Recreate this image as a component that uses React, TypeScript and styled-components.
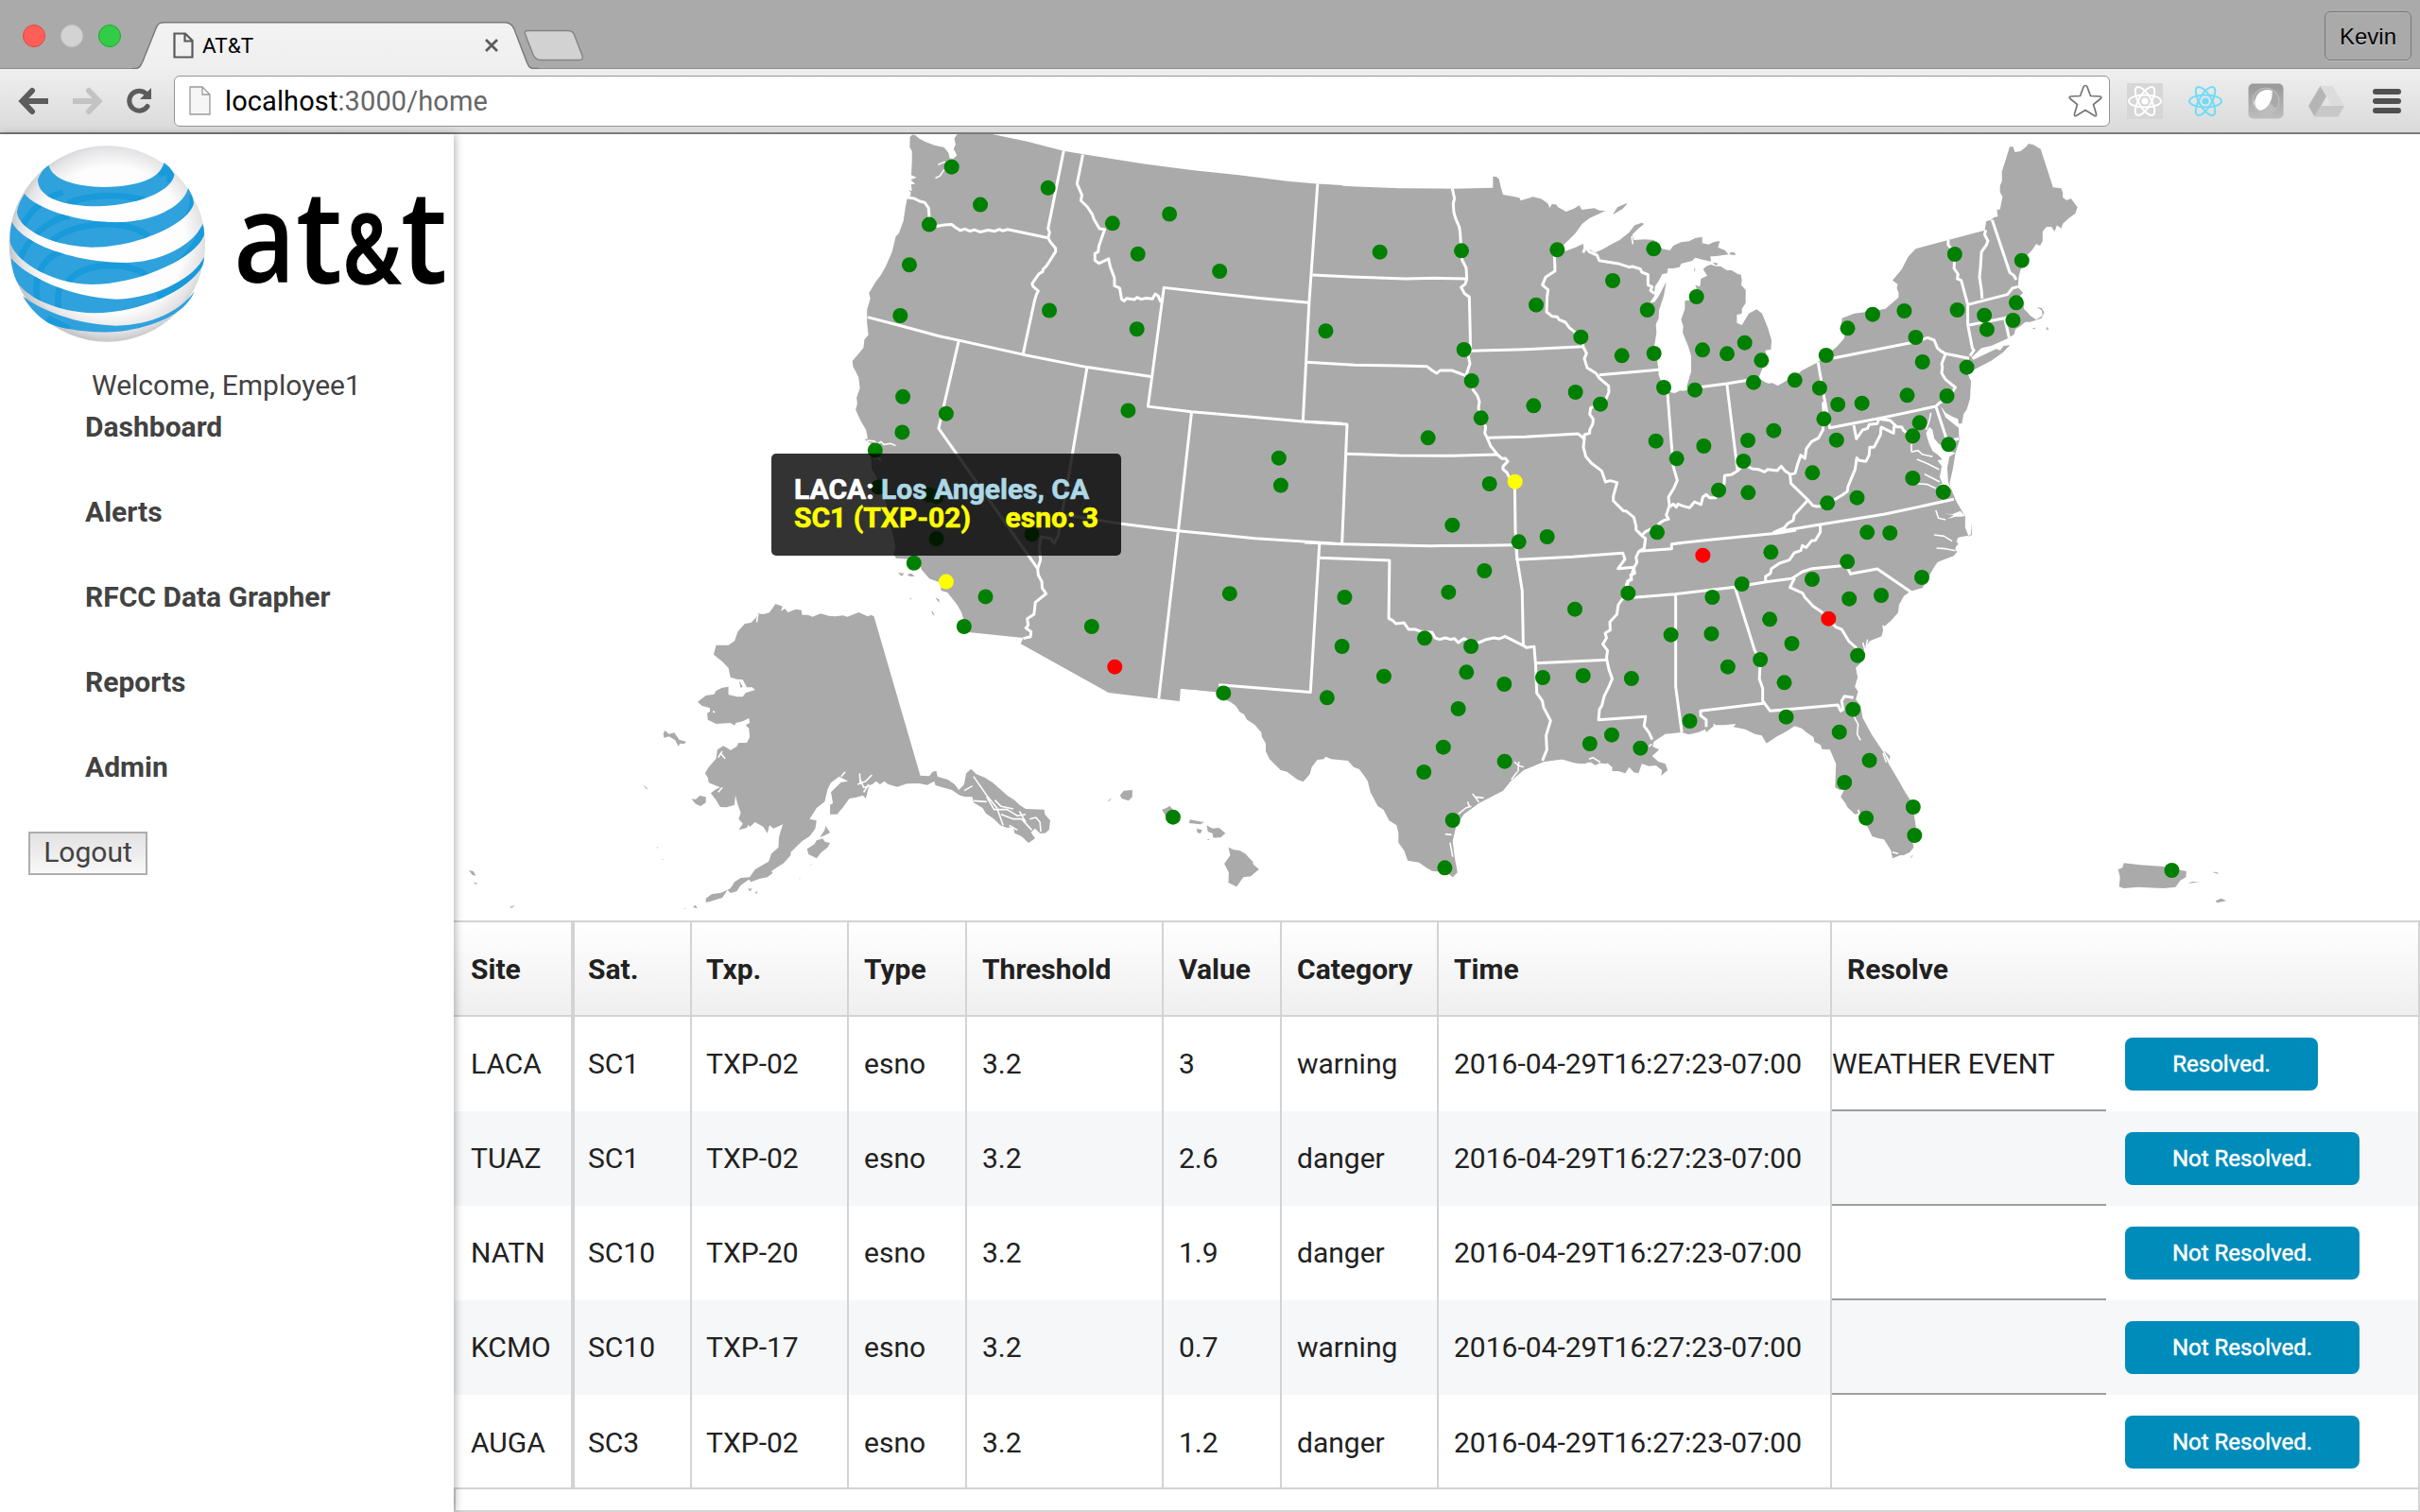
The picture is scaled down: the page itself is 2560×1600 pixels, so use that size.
import React from "react";
import styled, { createGlobalStyle } from "styled-components";

const GlobalStyle = createGlobalStyle`
  * { box-sizing: border-box; }
  html, body { margin: 0; padding: 0; background: #fff; }
  body { width: 2560px; height: 1600px; overflow: hidden; font-family: Roboto, "Liberation Sans", sans-serif; font-size: 30px; color: #212121; }
`;

const Window = styled.div`
  width: 2560px;
  height: 1600px;
  overflow: hidden;
  display: flex;
  flex-direction: column;
`;

/* ---------- browser chrome ---------- */

const TitleBar = styled.header`
  height: 73px;
  flex: none;
  display: flex;
  align-items: flex-start;
  padding: 0 9px 0 24px;
  background: #aaaaaa;
  box-shadow: inset 0 -1px 0 #8c8c8c;
`;

const Lights = styled.div`
  display: flex;
  gap: 16px;
  padding-top: 26px;
`;

const Light = styled.span<{ $fill: string; $edge: string }>`
  width: 24px;
  height: 24px;
  border-radius: 50%;
  background: ${(p) => p.$fill};
  border: 1px solid ${(p) => p.$edge};
`;

const Tab = styled.div`
  position: relative;
  width: 430px;
  height: 50px;
  margin: 23px 0 0 12px;
  padding: 0 42px 0 43px;
  display: flex;
  align-items: center;
`;

const TabShape = styled.svg`
  position: absolute;
  left: 0;
  top: 0;
`;

const TabTitle = styled.span`
  position: relative;
  flex: 1;
  margin-left: 9px;
  font-family: Roboto, sans-serif;
  font-size: 22.5px;
  color: #000;
`;

const TabIcon = styled.svg`
  position: relative;
  flex: none;
`;

const NewTab = styled.svg`
  margin: 31px 0 0 -16px;
`;

const UserButton = styled.button`
  margin: 12px 0 0 auto;
  width: 92px;
  height: 52px;
  padding: 2px 0 0;
  border: 1px solid #777;
  border-radius: 6px;
  background: transparent;
  box-shadow: 0 1px 0 #bdbdbd, inset 0 1px 0 #b6b6b6;
  font: 24px "Liberation Sans", sans-serif;
  color: #000;
  text-shadow: 0 1px 0 #ccc;
`;

const Toolbar = styled.div`
  height: 69px;
  flex: none;
  display: flex;
  align-items: center;
  padding: 0 20px 0 18px;
  background: linear-gradient(#efefef, #dadada);
  border-bottom: 2px solid #7c7c7c;
`;

const NavIcons = styled.div`
  display: flex;
  gap: 20px;
  width: 166px;
`;

const UrlBox = styled.div`
  width: 2048px;
  height: 54px;
  display: flex;
  align-items: center;
  padding: 0 7px 0 15px;
  border: 1px solid #959595;
  border-radius: 6px;
  background: #fff;
`;

const Url = styled.span`
  flex: 1;
  margin-left: 15px;
  padding-top: 1px;
  font-family: Roboto, sans-serif;
  font-size: 29px;
  letter-spacing: 0.1px;
  color: #000;
`;

const UrlRest = styled.span`
  color: #666;
`;

const Extensions = styled.div`
  display: flex;
  align-items: center;
  gap: 26px;
  margin-left: 18px;
`;

/* ---------- page ---------- */

const Page = styled.div`
  flex: 1;
  min-height: 0;
  display: flex;
`;

const Sidebar = styled.aside`
  position: relative;
  z-index: 1;
  width: 480px;
  flex: none;
  background: #fff;
  box-shadow: 2px 0 8px rgba(0, 0, 0, 0.28);
  color: #424242;
  line-height: 40px;
`;

const Logo = styled.svg`
  display: block;
`;

const Welcome = styled.div`
  margin: 26px 0 4px 97px;
`;

const Menu = styled.nav`
  display: flex;
  flex-direction: column;
  gap: 50px;
  padding-left: 90px;
`;

const MenuLink = styled.a`
  font-weight: 700;
`;

const Logout = styled.button`
  display: block;
  margin: 48px 0 0 30px;
  width: 126px;
  height: 46px;
  padding: 0 0 2px;
  border: 2px solid #adadad;
  background: linear-gradient(#e2e2e2, #f8f8f8);
  font: 30px/38px Roboto, sans-serif;
  color: #424242;
`;

const Content = styled.main`
  flex: 1;
  min-width: 0;
`;

const MapArea = styled.section`
  position: relative;
  height: 832px;
`;

const MapSvg = styled.svg`
  display: block;
`;

const Tooltip = styled.div`
  position: absolute;
  left: 336px;
  top: 338px;
  width: 370px;
  height: 108px;
  padding: 23px 24px;
  border-radius: 5px;
  background: rgba(0, 0, 0, 0.8);
  color: #fff;
  font-weight: 700;
  line-height: 30px;
  white-space: nowrap;
  -webkit-text-stroke: 0.6px currentColor;
`;

const Place = styled.span`
  color: lightblue;
`;

const Reading = styled.div`
  display: flex;
  justify-content: space-between;
  color: yellow;
`;

/* ---------- alert table ---------- */

const columns = "128px 124px 166px 125px 208px 125px 166px 416px 1fr";

const Table = styled.section`
  height: 626px;
  border: 2px solid #d3d3d3;
`;

const HeaderRow = styled.div`
  display: grid;
  grid-template-columns: ${columns};
  margin-left: -2px;
  height: 100px;
  background: linear-gradient(#fff, #efefef);
  border-bottom: 2px solid #d3d3d3;
  font-weight: 700;
`;

const Row = styled.div<{ $striped: boolean; $height: number }>`
  display: grid;
  grid-template-columns: ${columns};
  margin-left: -2px;
  height: ${(p) => p.$height}px;
  background: ${(p) => (p.$striped ? "#f6f7f8" : "#fff")};
`;

const Cell = styled.div<{ $wide?: boolean; $last?: boolean; $lift?: number }>`
  display: flex;
  align-items: center;
  padding: 0 0 ${(p) => p.$lift ?? 0}px 16px;
  border-right: ${(p) => (p.$last ? 0 : p.$wide ? 4 : 2)}px solid #d3d3d3;
  white-space: nowrap;
  &:first-child { padding-left: 18px; }
  &:nth-child(2) { padding-left: 14px; }
  &:nth-child(3) { padding-left: 15px; }
`;

const ResolveCell = styled.div`
  display: flex;
  align-items: center;
`;

const Reason = styled.div<{ $line: boolean }>`
  width: 290px;
  height: 100px;
  display: flex;
  align-items: center;
  border-bottom: ${(p) => (p.$line ? "2px solid #9e9e9e" : "0")};
`;

const ResolveButton = styled.button<{ $width: number }>`
  margin-left: 20px;
  width: ${(p) => p.$width}px;
  height: 56px;
  padding: 0;
  border: 0;
  border-radius: 8px;
  background: #008cba;
  color: #fff;
  font: 400 24px Roboto, sans-serif;
  -webkit-text-stroke: 0.5px currentColor;
`;

const TableFoot = styled.div`
  height: 24px;
  margin-left: -2px;
  border-top: 2px solid #d3d3d3;
`;

/* ---------- map data ---------- */

type Site = [number, number, string?];

interface Sheet {
  origin: [number, number];
  scale: [number, number];
  land: string[];
  borders: string[];
  water?: string[];
  lakes?: string[];
  sites: Site[];
}

const sheets: Sheet[] = [
  {
    origin: [880, 130],
    scale: [0.34439, 0.39541],
    land: [
      "M240 38L250 29 268 42 285 50 315 60 345 66 358 80 362 95 372 96 382 89 374 70 380 58 376 42 386 29 485 29 600 50 712 75 800 88 960 110 1100 126 1250 140 1400 156 1490 163 1568 167V1568H1250L1225 1548 1203 1530 1180 1523 1071 1514 1068 1548 1000 1541 850 1525 580 1394 588 1378 405 1362 404 1328 398 1310 385 1290 355 1257 336 1252 332 1230 300 1220 275 1195 270 1180 230 1167 197 1165 190 1155 195 1135 190 1110 175 1060 165 1010 150 975 135 945 122 925 122 905 118 890 120 858 100 848 110 845 105 822 90 800 73 768 78 752 76 735 86 710 82 680 65 652 63 637 75 625 97 602 100 580 112 568 108 535 108 500 118 470 114 455 135 425 150 408 165 385 185 345 196 305 206 295 220 262 226 225 232 200 242 195 242 185 236 180 246 182 243 165 256 163 242 153 260 146 244 140 246 100 246 75 239 65Z",
      "M203 1204L222 1206 214 1213ZM231 1209L244 1206 254 1214 240 1214ZM318 1270L330 1276 329 1285ZM306 1304L317 1319 308 1314ZM238 1272L246 1274 242 1276Z",
    ],
    borders: [
      "M232 200L252 202 270 210 285 213 297 228 299 250V272L320 277 345 273 368 272 380 280 395 288 408 284 425 290 437 286 455 292 480 287 500 290 515 285 525 289 540 285 664 308",
      "M712 75L664 283 669 293 664 308 672 320 687 335 687 345 660 382 648 393 648 398 636 404 615 430 618 438 634 450 628 460 622 478 587 620",
      "M771 85L753 163 768 193 765 208 785 225 800 245 805 258 822 283 838 285 820 330 818 345 808 350 808 368 820 376 835 370 850 364 855 385 868 415 868 436 884 442 890 472 898 477 905 470 930 473 937 467 950 472 965 469 985 471 993 458 1002 463 1011 480",
      "M1466 481L1320 470 1170 456 1020 441 971 759 1105 773 1447 799 1568 805",
      "M1492 163L1466 481 1447 799",
      "M110 520L220 545 330 571 390 582 587 620 784 654 980 679",
      "M390 582L328 818 632 1193 634 1210 645 1228 646 1245 658 1260 625 1283 621 1315 600 1327 603 1345 596 1352 612 1362 610 1375 588 1380",
      "M784 654L738 890 700 1080 695 1105 683 1125 672 1112 642 1108 637 1140 641 1170 632 1193",
      "M705 1048L889 1073 1064 1092 1300 1112 1568 1127",
      "M1105 773L1064 1092 1004 1541",
      "M1498 1122L1495 1164 1470 1524 1192 1504 1203 1525",
    ],
    water: [
      "M108 850L130 852 140 860 150 853 160 861 180 858 196 864",
      "M345 35L362 38 378 32M358 70L352 60 372 58 366 48M372 62V96M375 75L382 88M326 112L348 104M318 148L332 142 345 125M250 29L252 33M130 900L140 895 152 905",
    ],
    sites: [
      [368, 118], [456, 219], [664, 174], [299, 272], [238, 380], [210, 516], [218, 733], [216, 828],
      [133, 876], [351, 778], [862, 269], [1037, 244], [940, 351], [1191, 397], [668, 502], [937, 552],
      [910, 770], [1373, 897], [1379, 970], [1517, 557], [1222, 1260], [798, 1348], [869, 1456, "red"],
      [252, 1178], [351, 1228, "yellow"], [472, 1268], [406, 1348], [1203, 1526], [143, 975], [297, 995],
      [321, 1000], [321, 1113], [614, 1101],
    ],
  },
  {
    origin: [1380, 130],
    scale: [1 / 3, 1 / 3],
    land: [
      "M0 193L150 202 300 208 470 209 598 206V170L608 171 617 178 623 205 630 228 660 233 682 238 686 247 706 241 725 235 750 241 757 245 772 256 778 270 785 258 798 259 805 268 830 282 855 272 872 262 880 276 920 271 935 278 955 279 925 293 905 302 880 322 860 350 822 388 826 408 860 395 884 384 886 398 900 400 922 412 945 402 978 383 1000 372 1030 348 1048 325 1070 317 1078 321 1060 335 1040 355 1045 372 1080 370 1108 372 1135 400 1150 403 1160 405 1170 390 1195 379 1220 376 1240 366 1262 362 1262 382 1282 386 1300 378 1318 375 1312 395 1335 405 1345 418 1300 424 1288 424 1290 440 1262 434 1240 428 1230 438 1195 447 1190 458 1170 462 1155 462 1150 478 1135 480 1125 500 1112 520 1110 550 1095 572 1112 568 1125 548 1148 505 1140 550 1125 595 1124 620 1115 640 1117 665 1110 710 1118 745 1123 780 1124 800 1135 830 1160 855 1175 858 1212 840 1227 790V740L1218 710 1200 665 1202 645 1195 625 1207 590 1207 565 1230 562 1240 545 1244 525 1240 515 1255 520 1258 495 1278 485 1265 465 1275 455 1290 450 1305 455 1320 455 1340 468 1355 468 1375 480 1385 482 1388 500 1386 515 1400 530 1400 572 1388 590 1388 605 1372 610 1372 635 1388 642 1410 605 1435 592 1452 605 1470 650 1482 690 1480 720 1462 722 1465 735 1450 754 1455 775 1445 800 1440 810 1470 828 1485 826 1502 835 1540 812 1560 810V1500H0Z",
      "M980 290L995 270 1025 255 1010 272ZM1348 418L1352 410 1365 412 1368 420ZM1295 443L1313 446 1306 453ZM1236 458L1240 465 1238 474Z",
    ],
    borders: [
      "M25 483L150 489 320 495 415 493 515 495",
      "M469 209L476 240 472 255 474 285 480 305 491 330 494 350 497 406 500 435 513 460 515 495 510 512 497 522 508 542 523 553 527 722 520 740 525 765 512 803 468 786 430 786 420 795 405 786 388 773 300 771 160 769 6 760",
      "M527 724L700 719 885 710",
      "M793 420L795 470 765 490 755 515 773 530 770 550 768 600 785 614 802 616 808 625 828 633 840 650 877 680 885 712 895 732 888 748 897 778 925 795 935 810 965 835 966 855 955 880 940 892 908 905 905 925 916 940 915 955 905 975 905 985 888 990V1003L885 1030 893 1060 910 1080 943 1105 955 1140 970 1136 992 1142 980 1185V1200L1012 1232 1020 1232 1045 1252 1052 1280 1052 1292 1070 1310 1082 1320 1078 1350 1060 1362 1052 1380 1055 1395 1045 1413 1048 1430 1035 1435 1038 1450 1025 1455 1025 1475",
      "M884 412L892 395 905 410 928 420 935 437 1000 448 1030 458 1040 456 1066 464 1070 474 1090 482V515L1103 520 1098 532 1110 542",
      "M935 800L1125 784",
      "M512 803L530 820 535 848 548 865 555 885 552 905 560 937 575 965 572 985 580 1000 700 997 868 987 888 1003",
      "M580 1000L590 1025 612 1053 627 1066 638 1065 645 1075 630 1090 630 1100 642 1110 650 1125 667 1140 669 1290 674 1387",
      "M132 1051L300 1056 470 1057 612 1053",
      "M0 949L135 957 119 1335",
      "M0 1332L119 1337 400 1343 560 1342 669 1340",
      "M1152 860L1170 1090 1183 1135 1172 1160 1155 1188 1158 1215 1148 1245 1155 1258 1140 1262 1125 1272 1118 1295 1098 1290 1082 1298 1070 1310",
      "M1195 847L1340 828 1425 814M1340 826L1374 1103",
      "M1158 1220L1170 1210 1180 1220 1185 1210 1200 1216 1222 1222 1238 1203 1258 1212 1264 1188 1275 1180 1285 1190 1305 1190 1314 1167 1332 1145 1333 1120 1355 1117 1374 1105 1395 1085 1420 1098 1440 1100 1460 1108 1470 1100 1500 1104 1513 1090 1525 1105 1545 1118",
      "M674 1387L850 1378 1010 1366 1017 1385 995 1415 1045 1411",
      "M1060 1360L1165 1352V1337L1300 1322 1500 1303 1560 1293",
    ],
    water: [
      "M1152 465L1170 470 1165 490M1215 528L1222 520M1038 360L1042 385",
    ],
    sites: [
      [239, 410], [498, 406], [802, 403], [1108, 400], [978, 501], [735, 578], [1088, 594], [1244, 552],
      [506, 720], [877, 680], [1007, 739], [1109, 732], [1263, 721], [1341, 733], [1397, 698], [1450, 754],
      [1140, 840], [1239, 848], [1425, 824], [530, 819], [860, 855], [727, 898], [939, 893], [560, 937],
      [392, 1000], [1115, 1010], [1181, 1066], [1267, 1026], [1407, 1008], [1489, 977], [1393, 1074],
      [1314, 1166], [1408, 1174], [587, 1146], [668, 1139, "yellow"], [469, 1277], [680, 1330],
      [770, 1314], [1119, 1300], [1264, 1373, "red"], [1480, 1363], [571, 1422], [457, 1490],
      [1388, 1464], [1027, 1493],
    ],
  },
  {
    origin: [1700, 130],
    scale: [0.34439, 1 / 3],
    land: [
      "M440 830L490 826 525 835 560 815 577 805 600 785 648 760 670 740 705 712 728 685 735 650 720 638 722 620 760 605 816 598 855 590 895 555 896 540 890 525 893 512 877 500 905 465 925 425 948 400 1048 372 1160 341 1165 312 1180 308 1188 300 1200 298 1198 275 1207 275 1215 235 1207 220 1207 200 1213 185V155L1237 76H1247L1253 93 1270 90 1288 75 1295 66 1310 70 1332 83 1370 205 1395 208 1400 222 1400 237 1412 246 1425 240 1445 268 1438 288 1418 303 1400 320 1395 335 1382 325 1375 345 1365 330 1350 330 1338 345V375L1330 390 1318 385 1305 405 1290 420 1275 450 1265 485 1262 522 1278 540 1262 555 1280 575 1280 590 1290 600 1300 612 1318 625 1338 612 1335 595 1320 585 1335 588 1343 602 1335 620 1300 632 1285 632 1270 645 1255 655 1250 672 1230 685 1180 708 1150 715 1120 745 1125 752 1160 735 1195 718 1208 722 1218 708 1238 706 1215 730 1180 755 1130 782 1108 798 1118 820 1115 875 1105 910 1095 925 1090 955 1080 955 1078 940 1060 932 1040 920 1025 900 1040 935 1080 968 1082 1010 1070 1050 1062 1100 1052 1145 1060 1170 1075 1205 1100 1245 1100 1285 1110 1310 1085 1315 1058 1325 1080 1335 1068 1350 1075 1362 1065 1375 1030 1388 1015 1395 1000 1415 985 1440 970 1475 930 1488 915 1500H440Z",
      "M1305 652L1318 650 1312 655ZM1348 656L1352 647 1357 656ZM1118 1270L1121 1308 1106 1315 1118 1306Z",
      "M18 290L32 268 62 254 48 272Z",
    ],
    lakes: [
      "M1000 1042L1018 1055 1030 1068 1015 1072 1028 1090 1022 1125 1030 1145 1018 1150 1050 1158 1058 1165 1048 1140 1045 1095 1052 1060 1070 1048 1042 1040 1035 1025 1020 1020 1005 1002 1000 975 990 965 980 985 985 1005 990 1020Z",
      "M1035 1240L1060 1243 1085 1232 1100 1248 1088 1250 1070 1250 1045 1258 1065 1246Z",
    ],
    borders: [
      "M1048 372V388L1058 400 1068 417 1066 462 1078 480 1076 495 1088 500 1108 577V640L1122 715 1127 722 1115 740",
      "M1163 340L1160 355 1170 375 1165 388 1150 410 1147 460 1144 490 1150 530 1152 558",
      "M1183 308L1237 475 1250 485 1257 498",
      "M1108 577L1230 545 1245 525 1262 520",
      "M1108 643L1220 620 1240 615M1222 622L1235 682",
      "M695 747L940 697 985 682 1005 690 1015 715 1025 724 1040 733 1112 748",
      "M1040 733L1028 765 1030 775 1028 795 1040 815 1070 840 1050 870 1020 890 1010 900 850 935 684 968 665 860 648 760",
      "M1010 900L1045 1010 1080 1003",
      "M758 960L766 1003 785 975 800 970 805 958 830 955 835 940 850 942 870 945 890 965 905 965 912 978 935 990",
      "M840 965L880 985 882 962M842 965L840 990 820 1030 807 1030 805 1055 795 1075 775 1072 767 1064 762 1100 750 1130 740 1155 738 1170 722 1182 700 1195 685 1200 675 1215 645 1218 632 1215 615 1195 565 1145 562 1117 578 1112 585 1085 595 1055 608 1065 612 1035 628 1012 650 1000 663 975 666 940 664 890 672 885",
      "M615 1200L575 1245 572 1262 555 1272 545 1285 512 1300 655 1275 850 1243 1065 1195",
      "M655 1275V1300L640 1325 628 1327 612 1348 600 1342 595 1358 575 1365 560 1388 530 1398 505 1415 502 1430 487 1440V1455",
      "M570 1445L600 1425 630 1415 735 1405 748 1432 830 1416 935 1490",
    ],
    water: [
      "M995 920L990 945 980 975M935 1045V1020M935 1045L955 1040 968 1052 1000 1060M952 1068L985 1082 1020 1100M975 1115L1000 1128 1022 1140M950 1145L985 1148 1010 1160M1010 1230L1018 1255 1040 1260M1070 1190L1100 1245M1005 1308L1035 1312 1060 1328M1012 1350L1040 1352 1070 1358",
    ],
    sites: [
      [577, 817], [673, 738], [739, 652], [816, 608], [913, 597], [948, 681], [1068, 417], [1076, 594],
      [1159, 611], [1167, 656], [1257, 571], [1247, 627], [1274, 437], [1105, 776], [969, 759],
      [922, 865], [1044, 867], [653, 842], [709, 894], [783, 890], [666, 940], [705, 1007], [960, 952],
      [939, 994], [1049, 1021], [631, 1111], [939, 1128], [1033, 1172], [768, 1190], [677, 1207],
      [799, 1300], [869, 1302], [738, 1393], [630, 1449], [967, 1443],
    ],
  },
  {
    origin: [1080, 560],
    scale: [0.39541, 1 / 3],
    land: [
      "M400 0L427 506 530 516 545 540 560 548 575 560 585 580 597 588 605 605 625 620 643 645 645 660 655 680 655 705 665 730 695 765 712 770 740 795 755 802 773 778 778 755 793 732 810 730 815 722 830 730 875 735 890 755 905 762 920 785 928 800 935 835 955 880 970 890 985 925 1005 940 1010 965V995L1025 1020 1035 1052 1065 1058 1085 1075 1100 1085 1140 1090 1155 1105 1168 1090 1160 1040 1155 990 1165 940 1185 905 1225 870 1290 830 1310 800 1345 765 1400 738 1445 730 1480 742 1500 745 1520 740 1568 745V0Z",
      "M265 845L275 830 298 828V850L288 862 270 855ZM231 865L242 853 238 862ZM377 890L388 886 398 878 410 895 425 915 395 925ZM452 922L490 930 480 937 450 933ZM470 950L485 955 480 966 472 963ZM497 940L512 950 530 948 547 965 535 978 515 980 512 965 500 960ZM497 987L505 982 503 987ZM555 1010L570 1018 585 1020 600 1030 620 1055 622 1065 637 1079 615 1102 595 1105 577 1135 555 1122 556 1090 544 1062 560 1035Z",
    ],
    borders: [
      "M796 91L986 99 984 283 995 290 1003 300 1025 297 1037 318 1055 318 1070 325 1100 328 1108 345 1120 350 1135 345 1150 350 1160 347 1170 360 1185 347 1205 360 1225 360 1245 350 1265 345 1280 348 1295 340 1320 355 1345 370 1352 376 1373 373 1377 430 1380 520 1395 545 1398 565 1417 608 1405 655 1407 700 1395 735",
      "M1325 50L1328 98 1341 195 1344 370",
      "M1378 425L1568 415",
    ],
    water: [
      "M1170 905L1190 885 1205 880M1195 865L1200 882M1208 840L1215 850 1238 853M1215 850L1225 866M1135 968L1152 970M1148 995L1155 1040M1320 738L1330 750 1345 755M1332 738L1330 770M1520 730L1530 725 1550 740M1328 770L1312 795",
    ],
    sites: [
      [866, 216], [859, 372], [971, 467], [819, 535], [1080, 346], [1204, 372], [1192, 454], [1293, 492],
      [1170, 570], [1130, 692], [1078, 771], [1294, 737], [1155, 924], [1134, 1075], [407, 914],
      [1396, 471], [1504, 465], [1482, 254], [1522, 681],
    ],
  },
  {
    origin: [1600, 560],
    scale: [0.49745, 1 / 3],
    land: [
      "M0 0V790L20 765 65 738 110 730 135 742 155 745 165 730 175 735 185 730 200 740 212 755 212 768 225 768 240 775 248 755 258 772 268 775 275 745 290 752 305 750 318 765 316 782 330 765 325 745 310 738 297 720 312 700 298 690 300 675 325 650 360 645 375 652 395 645 410 635 412 645 430 622 450 622 475 618 470 628 495 635 515 650 530 655 540 680 560 660 585 640 600 625 615 632 625 645 640 660 642 675 655 685 658 698 675 700 688 745 686 820 696 828 706 825 698 850 708 870 712 882 728 905 745 900 755 945 765 975 775 980 790 985 805 1020 808 1045 825 1035 832 1035 845 1025 853 1010 850 985 858 945 850 870 835 835 820 795 800 745 790 710 765 655 745 600 740 560 730 540 735 515 728 500 734 470 730 440 740 425 745 390 760 355 785 340 790 310 805 290 820 265 822 240 835 205 845 195 870 187 885 150 905 100 935 85 942 60 950 0Z",
      "M1288 1080L1297 1075 1300 1060 1335 1066 1380 1070 1420 1082 1433 1086 1432 1105 1420 1115 1410 1136 1385 1140 1330 1136 1300 1140 1290 1135 1292 1105ZM1436 1125L1445 1119 1462 1119ZM1487 1088L1498 1089 1502 1095ZM1495 1180L1507 1172 1518 1180 1498 1186ZM790 703L803 720 802 733ZM168 742L177 738 184 744 176 749ZM845 1045L852 1032 849 1042Z",
    ],
    borders: [
      "M245 218L345 206 473 184 540 167 600 155",
      "M345 206L347 215V500L360 645",
      "M473 184L515 385 527 414 525 475 532 505V545L548 577 692 558 698 577 703 572 700 545 706 530 725 535",
      "M538 552L400 577V592L412 605V628",
      "M600 155L590 185 617 203 622 217 640 245 655 260 672 284 687 310 700 318 715 355 732 378",
      "M258 120L252 155 242 175 245 205 232 225 225 240 222 270 207 295 208 320 197 330 200 345 192 365 202 385 200 410 205 445 212 475 205 500 195 530 190 560 185 572 183 605 283 595 280 625 290 645 297 668",
    ],
    water: [
      "M725 592L735 620 733 650 740 670M745 360L750 385M755 350L752 375M788 305L790 322M788 710L795 740M428 618L432 630M290 690L296 682M808 1025L820 1030M735 890L738 905",
    ],
    sites: [
      [425, 216], [337, 335], [423, 332], [547, 286], [594, 363], [527, 414], [458, 437], [578, 487],
      [253, 474], [716, 221], [784, 210], [672, 284, "red"], [734, 401], [724, 572], [582, 596],
      [377, 609], [695, 644], [759, 734], [706, 804], [852, 882], [752, 917], [855, 972], [211, 653],
      [272, 695], [1402, 1083],
    ],
  },
  {
    origin: [480, 600],
    scale: [0.43367, 1 / 3],
    land: [
      "M785 117L802 125 798 140 808 132 815 144 835 134 848 137 850 152 865 152 875 158 895 148 915 155 930 157 950 154 960 158 988 144 1010 157 1018 152 1025 157 1138 662 1160 664 1168 650 1177 647 1180 665 1205 675 1222 690 1232 708 1245 690 1250 655 1262 641 1275 658 1295 668 1315 685 1350 725 1368 740 1380 755 1395 768 1440 770 1442 785 1455 805 1452 835 1442 845 1430 845 1418 830 1408 842 1418 862 1402 876 1385 855 1368 845 1365 825 1350 828 1333 820 1318 800 1298 782 1290 765 1268 748 1265 730 1248 730 1235 725 1215 708 1175 693 1172 680 1155 692 1135 687 1105 688 1082 698 1060 690 1050 680 1040 690 1030 680 1012 700 1005 735 998 725 980 732 965 735 950 762 935 785 918 785 918 755 925 750 920 715 945 683 962 680 940 665 920 685 912 705 905 745 885 765 868 800 885 805 882 830 868 855 850 870 822 905 822 915 805 940 775 965 778 972 765 985 745 990 725 1000 720 992 700 1010 690 1030 675 1035 668 1025 655 1050 625 1062 615 1065 615 1052 630 1038 650 1035 668 1025 675 1020 685 1000 700 987 722 985 735 960 768 935 775 910 792 890 793 860 797 840 803 817 780 830 770 820 765 845 755 825 735 810 722 825 718 818 715 828 695 835 705 815 695 800 700 780 692 750 687 725 685 755 665 763 650 762 640 740 627 718 640 705 650 700 622 685 620 670 613 655 622 635 640 608 643 580 657 568 668 575 675 582 690 570 695 558 715 558 722 540 720 512 712 502 722 495 720 480 705 490 688 495 685 503 675 495 640 498 620 485 618 465 625 458 625 448 605 440 595 428 615 408 635 404 640 393 655 383 670 380V405L690 412 705 412 712 400 735 390 728 382 715 382 705 358 690 356 675 350 670 320 655 300 634 278 640 248 670 248 685 235 693 205 710 180 725 177 738 160 742 148 755 150 770 145Z",
      "M862 895L880 880 885 868 900 862 905 872 918 876 912 890 897 905 885 925 875 918 865 912ZM893 858L905 835 907 822 918 843 905 852ZM511 530L515 519 525 530 538 526 550 548 567 555 562 562 552 560 548 569 540 550 525 538 513 542ZM580 736L590 738 600 726 615 730V748L602 759 590 752ZM462 690L475 707 468 703ZM37 963L48 966 54 980 45 977ZM48 1003L57 1003 55 1009ZM135 1080L150 1074 142 1082ZM583 1080L590 1073 594 1084ZM718 1020L728 1022 722 1030ZM735 1032L742 1030 738 1038ZM865 950L880 940 870 946ZM495 890L499 889 497 893ZM508 927L512 928 510 930ZM560 1084L568 1084 564 1085ZM843 988L846 990 843 991ZM696 360L705 380 700 384Z",
    ],
    borders: [],
    water: [
      "M1268 665L1300 725 1325 765 1340 820M1245 710L1265 695M1268 742L1300 745M1300 730L1318 770 1350 770 1375 790 1395 785M1335 785L1365 800 1385 800 1410 835M1405 800L1420 795 1430 810 1432 840M1320 740L1335 760 1365 768M1380 775L1395 810M1355 820L1375 835M985 690L1005 680 1020 660M990 670L1000 700 1030 690M955 650L945 665M645 605L655 585M650 590L662 608M742 150L739 175M990 655L992 690M1000 715L1012 690M655 700L645 715M632 458L637 461",
    ],
    sites: [],
  },
];

const UsaMap = () => (
  <MapSvg width="2080" height="832" viewBox="480 142 2080 832">
    {sheets.map((s, i) => (
      <g key={i} transform={`translate(${s.origin.join(" ")}) scale(${s.scale.join(" ")})`} fill="#aaaaaa">
        {s.land.map((d) => (
          <path key={d} d={d} />
        ))}
      </g>
    ))}
    {sheets.map((s, i) => (
      <g
        key={i}
        transform={`translate(${s.origin.join(" ")}) scale(${s.scale.join(" ")})`}
        fill="none"
        stroke="#fff"
        strokeLinejoin="round"
      >
        {(s.lakes ?? []).map((d) => (
          <path key={d} d={d} fill="#fff" stroke="none" />
        ))}
        {s.borders.map((d) => (
          <path key={d} d={d} strokeWidth="3" vectorEffect="non-scaling-stroke" />
        ))}
        {(s.water ?? []).map((d) => (
          <path key={d} d={d} strokeWidth="1.6" vectorEffect="non-scaling-stroke" />
        ))}
      </g>
    ))}
    {sheets.flatMap((s, i) =>
      s.sites.map(([x, y, fill], j) => (
        <circle
          key={`${i}-${j}`}
          cx={s.origin[0] + x * s.scale[0]}
          cy={s.origin[1] + y * s.scale[1]}
          r="8"
          fill={fill ?? "green"}
        />
      ))
    )}
  </MapSvg>
);

/* ---------- logo ---------- */

const stripes = [
  "M155 105C165 150 240 173 330 174C430 172 510 150 520 96C532 104 545 118 553 134C545 190 430 235 290 235C180 230 120 200 120 150C128 130 140 112 155 105Z",
  "M78 195C110 240 240 285 370 286C480 285 580 240 597 178C605 190 612 205 615 225C600 290 440 365 290 365C150 360 55 300 54 252C58 230 68 210 78 195Z",
  "M38 285C70 350 220 412 400 414C520 412 620 350 643 290C648 305 649 320 647 328C620 400 440 483 290 483C150 480 40 400 31 345C31 320 34 300 38 285Z",
  "M35 400C80 455 220 525 370 530C500 525 620 460 648 395C647 408 645 418 642 425C600 500 450 572 300 574C180 572 70 520 48 462C40 440 36 420 35 400Z",
  "M72 520C120 560 240 612 370 614C480 612 570 570 617 505C610 522 602 534 590 547C540 600 430 635 330 635C250 633 190 622 155 607C120 585 90 552 72 520Z",
];

const AttLogo = () => (
  <Logo width="480" height="220" viewBox="0 6 1440 660">
    <defs>
      <radialGradient id="ball" cx="0.52" cy="0.48" r="0.52">
        <stop offset="0" stopColor="#fff" />
        <stop offset="0.72" stopColor="#fdfdfd" />
        <stop offset="0.9" stopColor="#e4e4e6" />
        <stop offset="1" stopColor="#c6c6c9" />
      </radialGradient>
      <clipPath id="stripes">
        {stripes.map((d) => (
          <path key={d} d={d} />
        ))}
      </clipPath>
    </defs>
    <circle cx="340" cy="354" r="311" fill="url(#ball)" />
    <g clipPath="url(#stripes)">
      <rect width="700" height="700" fill="#2fa2dd" />
      <g fill="none" stroke="#0b94d8" strokeWidth="20" strokeOpacity="0.6">
        <path d="M215 225C290 195 380 195 460 215" />
        <path d="M70 300C100 240 150 205 200 190" />
        <path d="M165 345C230 285 400 270 470 330" />
        <path d="M55 420C90 330 150 280 220 265" />
        <path d="M215 475C270 405 420 410 470 460" />
        <path d="M120 540C100 440 150 380 230 370" />
        <path d="M185 560C182 530 184 510 190 490" />
        <path d="M150 590C170 600 195 610 220 625" />
        <path d="M500 130C540 110 550 130 540 160" strokeWidth="30" />
        <path d="M500 345C590 290 620 250 610 200" />
        <path d="M500 460C580 420 630 370 645 300" strokeWidth="26" />
        <path d="M500 525C560 500 620 450 645 400" strokeWidth="26" />
      </g>
    </g>
    <g fontFamily="Open Sans, sans-serif" fontWeight="600" fill="#000">
      <text x="742" y="476" fontSize="395" textLength="196" lengthAdjust="spacingAndGlyphs">a</text>
      <text x="939" y="479" fontSize="415" textLength="148" lengthAdjust="spacingAndGlyphs">t</text>
      <text x="1089" y="479" fontSize="306" textLength="182" lengthAdjust="spacingAndGlyphs" stroke="#000" strokeWidth="5">&amp;</text>
      <text x="1272" y="479" fontSize="415" textLength="148" lengthAdjust="spacingAndGlyphs">t</text>
    </g>
  </Logo>
);

/* ---------- icons ---------- */

const Arrow = ({ color, flip }: { color: string; flip?: boolean }) => (
  <svg width="36" height="30" viewBox="0 0 36 30">
    <g transform={flip ? "translate(36 0) scale(-1 1)" : undefined} fill="none" stroke={color} strokeWidth="6">
      <path d="M16 4L5.500 15 16 26" strokeLinecap="round" strokeLinejoin="miter" />
      <path d="M7 15H33" />
    </g>
  </svg>
);

const Reload = () => (
  <svg width="36" height="30" viewBox="0 0 36 30">
    <path d="M26 20.500A10.500 10.500 0 1 1 25 7.500" fill="none" stroke="#5c5c5c" strokeWidth="5" strokeLinecap="round" />
    <path d="M30 1V13H18Z" fill="#5c5c5c" />
  </svg>
);

const Atom = ({ color, box }: { color: string; box?: string }) => (
  <svg width="38" height="38" viewBox="-19 -19 38 38">
    {box && <rect x="-19" y="-19" width="38" height="38" fill={box} />}
    <g fill="none" stroke={color} strokeWidth="2">
      {[0, 60, 120].map((a) => (
        <ellipse key={a} rx="17" ry="6.600" transform={`rotate(${a})`} />
      ))}
    </g>
    <circle r="3.600" fill={color} />
  </svg>
);

/* ---------- table data ---------- */

const headings = ["Site", "Sat.", "Txp.", "Type", "Threshold", "Value", "Category", "Time", "Resolve"];

const alerts = [
  { cells: ["LACA", "SC1", "TXP-02", "esno", "3.2", "3", "warning", "2016-04-29T16:27:23-07:00"], reason: "WEATHER EVENT", done: true },
  { cells: ["TUAZ", "SC1", "TXP-02", "esno", "3.2", "2.6", "danger", "2016-04-29T16:27:23-07:00"], reason: "", done: false },
  { cells: ["NATN", "SC10", "TXP-20", "esno", "3.2", "1.9", "danger", "2016-04-29T16:27:23-07:00"], reason: "", done: false },
  { cells: ["KCMO", "SC10", "TXP-17", "esno", "3.2", "0.7", "warning", "2016-04-29T16:27:23-07:00"], reason: "", done: false },
  { cells: ["AUGA", "SC3", "TXP-02", "esno", "3.2", "1.2", "danger", "2016-04-29T16:27:23-07:00"], reason: "", done: false },
];

export default function App() {
  return (
    <Window>
      <GlobalStyle />
      <TitleBar>
        <Lights>
          <Light $fill="#ff5f57" $edge="#e2463f" />
          <Light $fill="#d3d3d3" $edge="#c6c6c6" />
          <Light $fill="#33cc47" $edge="#1fa836" />
        </Lights>
        <Tab>
          <TabShape width="430" height="50" viewBox="0 0 430 50">
            <defs>
              <linearGradient id="tab" x1="0" y1="0" x2="0" y2="1">
                <stop offset="0" stopColor="#f3f3f3" />
                <stop offset="1" stopColor="#efefef" />
              </linearGradient>
            </defs>
            <path
              d="M0 49.500H4C8 49 9 46 11 42L25 7C27 2 29 .8 34 .8H394C399 .8 402 3 404 8L417 42C419 47 420 49 424 49.500H430V50H0Z"
              fill="url(#tab)"
            />
            <path
              d="M0 49.500H4C8 49 9 46 11 42L25 7C27 2 29 .8 34 .8H394C399 .8 402 3 404 8L417 42C419 47 420 49 424 49.500H430"
              fill="none"
              stroke="#777"
              strokeWidth="1.400"
            />
          </TabShape>
          <TabIcon width="22" height="28" viewBox="0 0 22 28">
            <path d="M1.500 1.500H13L20.500 9V26.500H1.500ZM12.500 1.500V9.500H20.500" fill="none" stroke="#5a5a5a" strokeWidth="2.200" />
          </TabIcon>
          <TabTitle>AT&amp;T</TabTitle>
          <TabIcon width="16" height="16" viewBox="0 0 16 16">
            <path d="M2 2L14 14M14 2L2 14" stroke="#5c5c5c" strokeWidth="2.800" />
          </TabIcon>
        </Tab>
        <NewTab width="64" height="34" viewBox="0 0 64 34">
          <path
            d="M4 1.500H47C51 1.500 53 3 54 7L62 28C63 31 62 32.500 59 32.500H18C14 32.500 12 31 10 27L1.500 5C1 2.500 1.500 1.500 4 1.500Z"
            fill="#d2d2d2"
            stroke="#858585"
            strokeWidth="1.500"
          />
        </NewTab>
        <UserButton>Kevin</UserButton>
      </TitleBar>
      <Toolbar>
        <NavIcons>
          <Arrow color="#5c5c5c" />
          <Arrow color="#c3c3c3" flip />
          <Reload />
        </NavIcons>
        <UrlBox>
          <svg width="23" height="32" viewBox="0 0 23 32">
            <path d="M1 1H14L22 9V30H1ZM14 1V9H22" fill="#f6f6f6" stroke="#9a9a9a" strokeWidth="1.300" />
          </svg>
          <Url>
            localhost<UrlRest>:3000/home</UrlRest>
          </Url>
          <svg width="36" height="36" viewBox="0 0 36 36">
            <path
              d="M18 1.500C19 1.500 19.600 2 20 3L23.500 12.500 33.500 13C35 13.200 35.300 14.300 34 15.500L26.500 21.500 29.500 31.500C29.800 33.500 29 34.300 27.300 33.300L18 27.500 8.700 33.300C7 34.300 6.200 33.500 6.500 31.500L9.500 21.500 2 15.500C.7 14.300 1 13.200 2.500 13L12.500 12.500 16 3C16.400 2 17 1.500 18 1.500Z"
              fill="#fff"
              stroke="#757575"
              strokeWidth="1.700"
            />
          </svg>
        </UrlBox>
        <Extensions>
          <Atom color="#fff" box="#d6d6d6" />
          <Atom color="#6fdcf7" />
          <svg width="38" height="38" viewBox="0 0 38 38">
            <defs>
              <linearGradient id="badge" x1="0" y1="0" x2="0" y2="1">
                <stop offset="0" stopColor="#989898" />
                <stop offset="1" stopColor="#bdbdbd" />
              </linearGradient>
            </defs>
            <rect x=".5" y=".5" width="37" height="37" rx="5" fill="url(#badge)" />
            <circle cx="19" cy="19" r="14" fill="#a9a9a9" stroke="#c4c4c4" />
            <path d="M7 25A14 14 0 0 0 31 26C25 25 24 20 22 19Z" fill="#bcbcbc" />
            <path d="M5.500 20A14 14 0 0 0 13 29L20 20 10 14Z" fill="#dedede" />
            <path d="M25.500 8C18 5 9 9 8 18C7.500 24 9 28 13 28.500C19 29 27 19 25.500 8Z" fill="#fff" />
          </svg>
          <svg width="38" height="34" viewBox="0 0 38 34">
            <path d="M12.500 1L19 12 6.500 33.500 0 22Z" fill="#b5b5b5" />
            <path d="M12.500 1H25.500L38 22H25Z" fill="#dcdcdc" />
            <path d="M13 22H38L31.500 33.500H6.500Z" fill="#c8c8c8" />
          </svg>
          <svg width="34" height="38" viewBox="0 0 34 38">
            <g fill="#505050">
              <rect x="4" y="6" width="30" height="6" rx="3" />
              <rect x="4" y="16" width="30" height="6" rx="3" />
              <rect x="4" y="26" width="30" height="6" rx="3" />
            </g>
          </svg>
        </Extensions>
      </Toolbar>
      <Page>
        <Sidebar>
          <AttLogo />
          <Welcome>Welcome, Employee1</Welcome>
          <Menu>
            {["Dashboard", "Alerts", "RFCC Data Grapher", "Reports", "Admin"].map((label) => (
              <MenuLink key={label}>{label}</MenuLink>
            ))}
          </Menu>
          <Logout>Logout</Logout>
        </Sidebar>
        <Content>
          <MapArea>
            <UsaMap />
            <Tooltip>
              <div>
                LACA: <Place>Los Angeles, CA</Place>
              </div>
              <Reading>
                <span>SC1 (TXP-02)</span>
                <span>esno: 3</span>
              </Reading>
            </Tooltip>
          </MapArea>
          <Table>
            <HeaderRow>
              {headings.map((h, i) => (
                <Cell key={h} $wide={i === 0} $last={i === 8}>
                  {h}
                </Cell>
              ))}
            </HeaderRow>
            {alerts.map((a, i) => (
              <Row key={a.cells[0]} $striped={i % 2 === 1} $height={i === 4 ? 98 : 100}>
                {a.cells.map((c, j) => (
                  <Cell key={j} $wide={j === 0} $lift={i === 4 ? 0 : 2}>
                    {c}
                  </Cell>
                ))}
                <ResolveCell>
                  <Reason $line={i < 4}>{a.reason}</Reason>
                  <ResolveButton $width={a.done ? 204 : 248}>{a.done ? "Resolved." : "Not Resolved."}</ResolveButton>
                </ResolveCell>
              </Row>
            ))}
            <TableFoot />
          </Table>
        </Content>
      </Page>
    </Window>
  );
}
